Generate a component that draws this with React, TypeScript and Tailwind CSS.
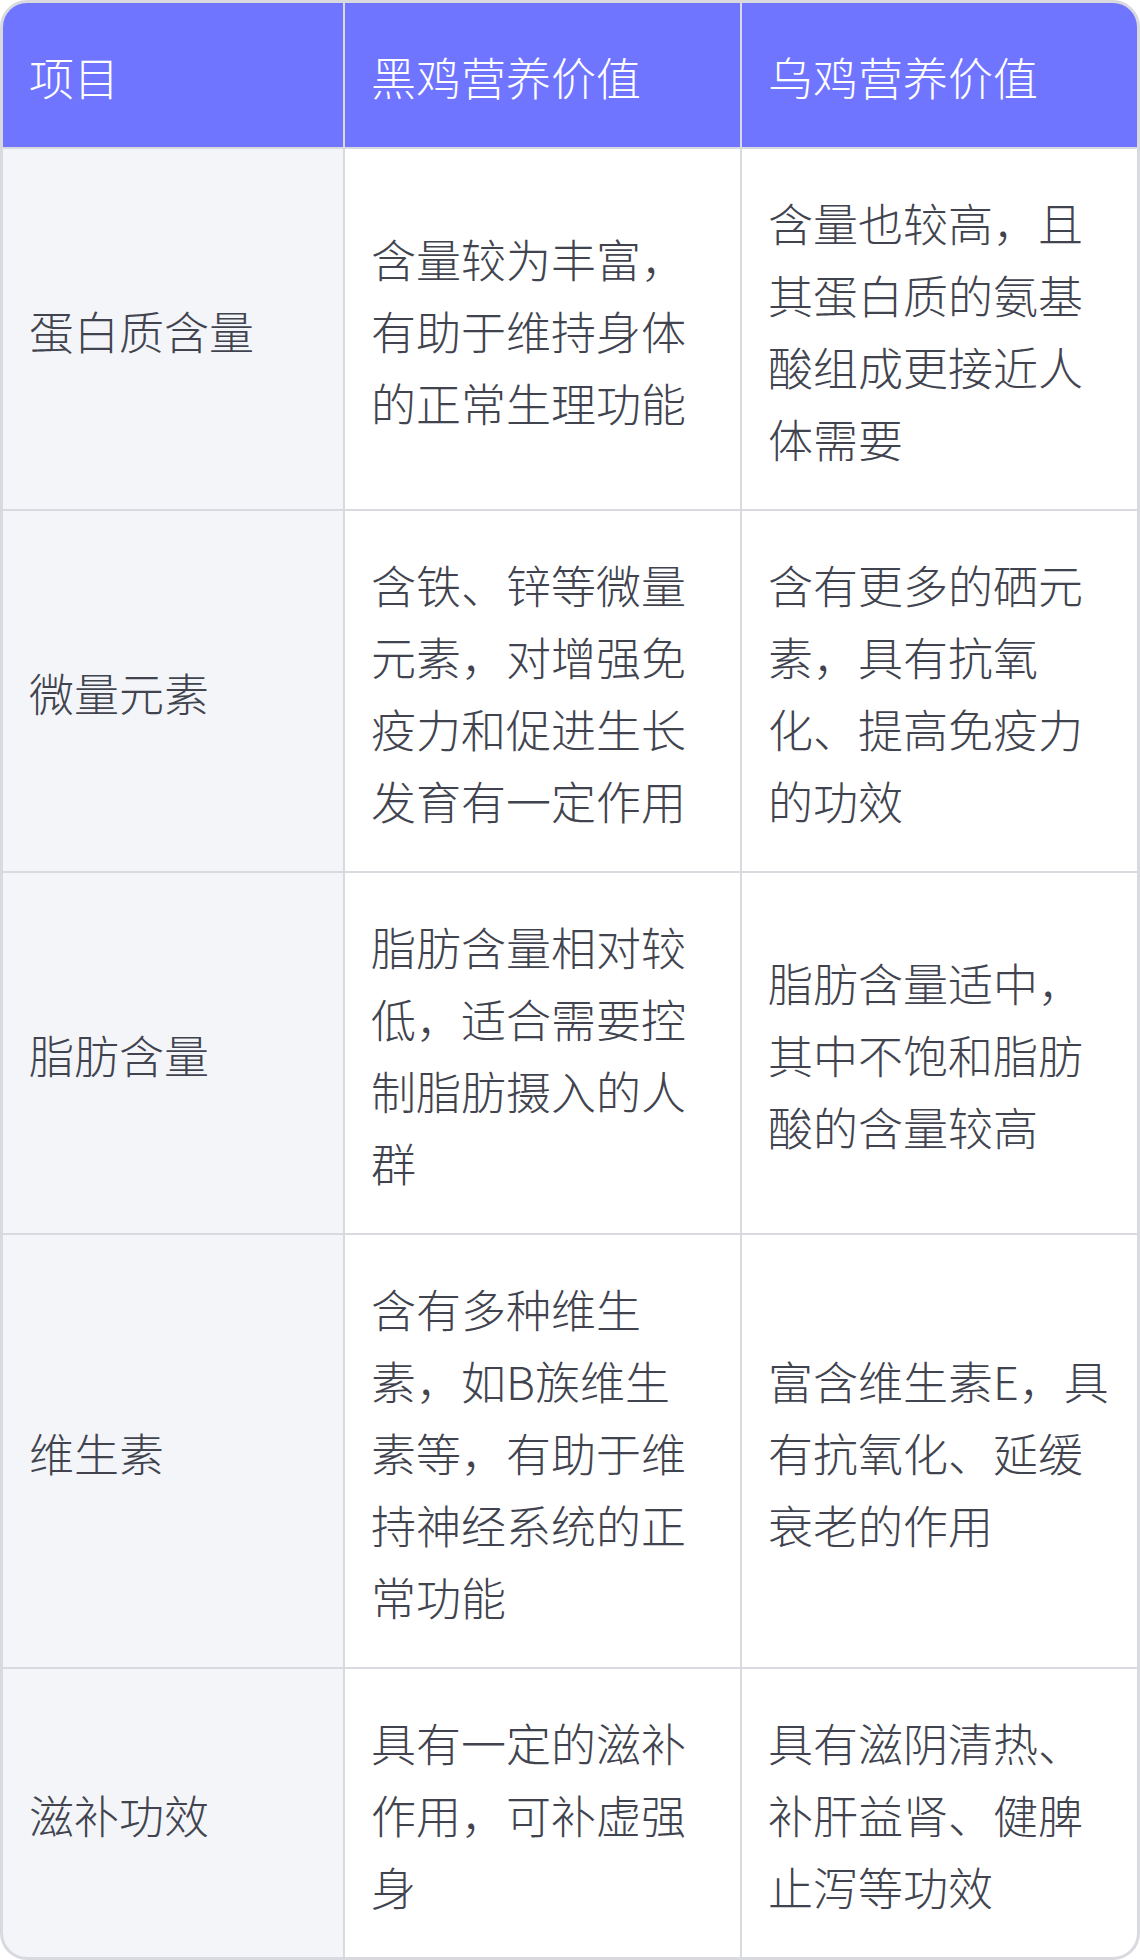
const rows: [string, string, string][] = [
  ['蛋白质含量', '含量较为丰富，有助于维持身体的正常生理功能', '含量也较高，且其蛋白质的氨基酸组成更接近人体需要'],
  ['微量元素', '含铁、锌等微量元素，对增强免疫力和促进生长发育有一定作用', '含有更多的硒元素，具有抗氧化、提高免疫力的功效'],
  ['脂肪含量', '脂肪含量相对较低，适合需要控制脂肪摄入的人群', '脂肪含量适中，其中不饱和脂肪酸的含量较高'],
  ['维生素', '含有多种维生素，如B族维生素等，有助于维持神经系统的正常功能', '富含维生素E，具有抗氧化、延缓衰老的作用'],
  ['滋补功效', '具有一定的滋补作用，可补虚强身', '具有滋阴清热、补肝益肾、健脾止泻等功效'],
];

const cell = 'flex items-center pl-[26px] pr-[26px] pt-[38px] pb-[34px]';

export default function App() {
  return (
    <div className="bg-white w-[1140px] min-h-[1960px]">
      <div
        className="grid grid-cols-[340px_395px_395px] gap-[2px] bg-[#d9dae0] border-[3px] border-[#d9dae0] rounded-[27px] overflow-hidden text-[45px] leading-[72px] font-light text-[#41444f]"
        style={{ fontFamily: '"Noto Sans CJK SC", "Noto Sans", sans-serif' }}
      >
        <div className={`${cell} bg-[#7075ff] text-white`}>项目</div>
        <div className={`${cell} bg-[#7075ff] text-white`}>黑鸡营养价值</div>
        <div className={`${cell} bg-[#7075ff] text-white`}>乌鸡营养价值</div>
        {rows.map(([name, black, silkie]) => (
          <div key={name} className="contents">
            <div className={`${cell} bg-[#f4f5f9]`}>{name}</div>
            <div className={`${cell} bg-white`}>{black}</div>
            <div className={`${cell} bg-white`}>{silkie}</div>
          </div>
        ))}
      </div>
    </div>
  );
}
